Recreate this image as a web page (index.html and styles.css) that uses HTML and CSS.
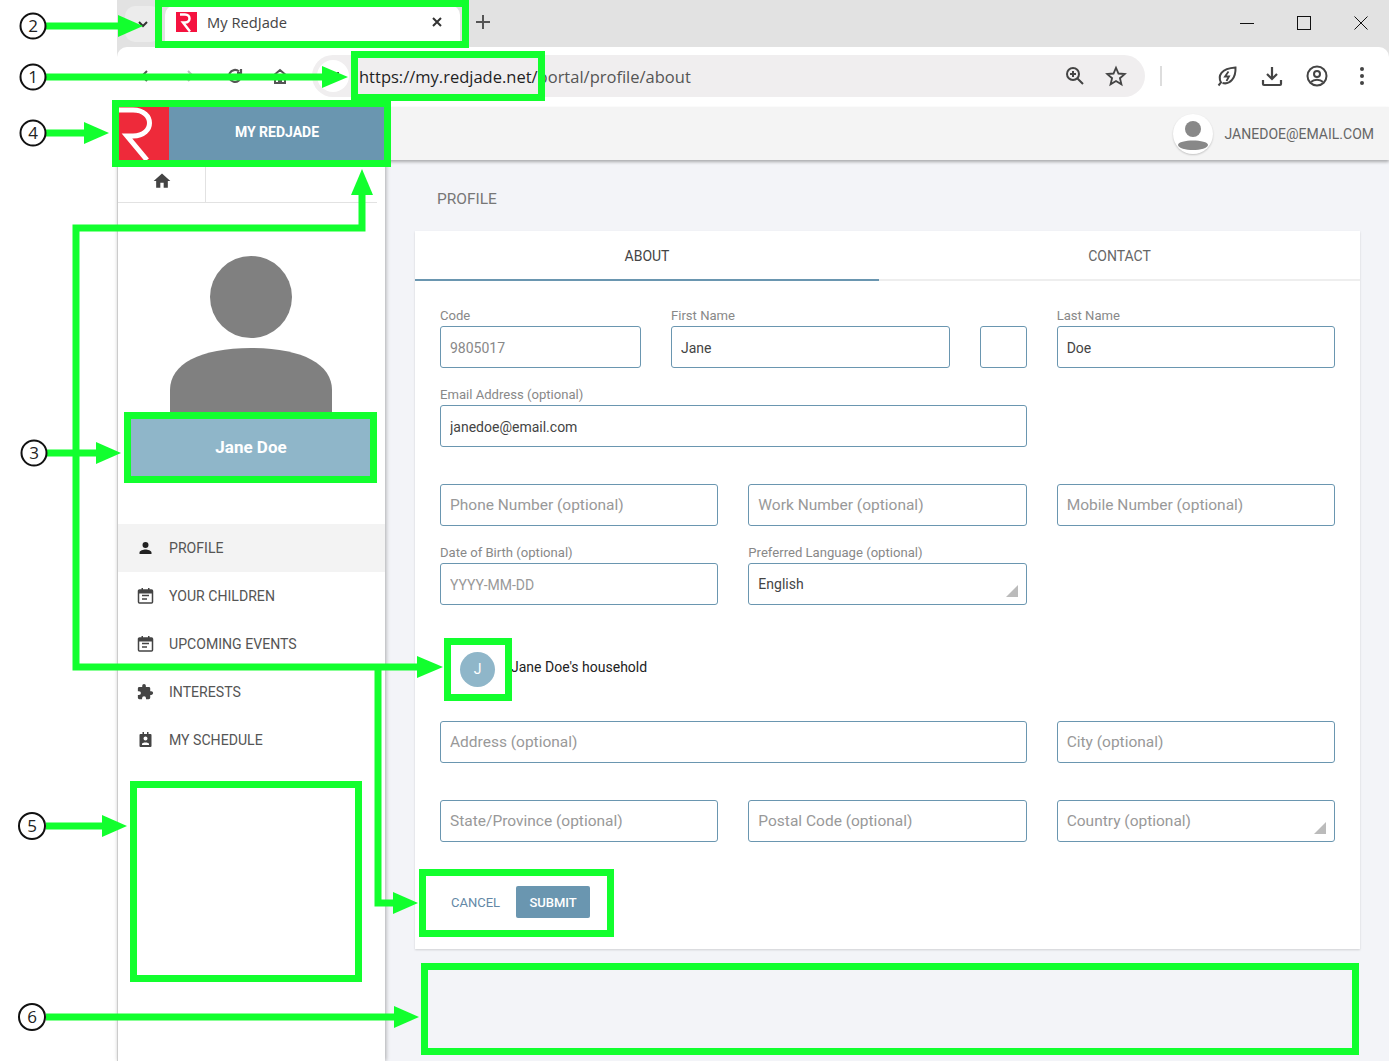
FILE: index.html
```html
<!DOCTYPE html>
<html lang="en">

<head>
  <meta charset="UTF-8">
  <meta name="viewport" content="width=device-width, initial-scale=1.0">
  <title>My RedJade</title>
  <link rel="stylesheet" href="styles.css">
</head>

<body>
  <div class="gutter"></div>
  <div class="browser">
    <div class="tabstrip">
      <div class="tab-search"><svg width="12" height="12" viewBox="0 0 12 12"><path d="M2 4l4 4 4-4" fill="none" stroke="#333" stroke-width="2"/></svg></div>
      <div class="tab">
        <svg class="favicon" width="21" height="20" viewBox="0 0 21 20"><rect width="21" height="20" fill="#f5123f"/><path d="M4 2.500h5c6 0 6 8 0 8H7l7 9" fill="none" stroke="#fff" stroke-width="2.500"/></svg>
        <span class="tab-title">My RedJade</span>
        <svg class="tab-close" width="10" height="10" viewBox="0 0 10 10"><path d="M1 1l8 8M9 1l-8 8" stroke="#333" stroke-width="2"/></svg>
      </div>
      <svg class="new-tab" width="14" height="14" viewBox="0 0 14 14"><path d="M7 0v14M0 7h14" stroke="#555" stroke-width="2"/></svg>
      <div class="win-controls">
        <svg width="14" height="14" viewBox="0 0 14 14"><path d="M0 7.500h14" stroke="#111"/></svg>
        <svg width="14" height="14" viewBox="0 0 14 14"><rect x=".5" y=".5" width="13" height="13" fill="none" stroke="#111"/></svg>
        <svg width="14" height="14" viewBox="0 0 14 14"><path d="M.5.5l13 13M13.500.5l-13 13" stroke="#111"/></svg>
      </div>
    </div>

    <div class="toolbar">
      <div class="nav-icons">
        <span class="nav-icon"><svg width="16" height="16" viewBox="0 0 16 16"><path d="M10 3L5 8l5 5" fill="none" stroke="#555" stroke-width="2"/></svg></span>
        <span class="nav-icon"><svg width="16" height="16" viewBox="0 0 16 16"><path d="M6 3l5 5-5 5" fill="none" stroke="#bbb" stroke-width="2"/></svg></span>
        <span class="nav-icon"><svg width="18" height="18" viewBox="0 0 18 18"><path d="M15 9a6 6 0 1 1-2-4.500M15 2v4h-4" fill="none" stroke="#555" stroke-width="2.200"/></svg></span>
        <span class="nav-icon"><svg width="18" height="18" viewBox="0 0 18 18"><path d="M2 9l7-6 7 6M4 8v8h4v-4h2v4h4V8" fill="none" stroke="#555" stroke-width="2"/></svg></span>
      </div>
      <div class="urlbar">
        <div class="site-info"><svg width="16" height="16" viewBox="0 0 16 16"><path d="M2 5h7M12 5h2M2 11h2M7 11h7" stroke="#444" stroke-width="2"/></svg></div>
        <div class="url"><span class="url-host">https://my.redjade.net/</span><span class="url-path">portal/profile/about</span></div>
        <svg class="url-icon" width="20" height="20" viewBox="0 0 20 20"><circle cx="8" cy="8" r="6" fill="none" stroke="#444" stroke-width="2"/><path d="M12.500 12.500L18 18M5 8h6M8 5v6" stroke="#444" stroke-width="2"/></svg>
        <svg class="url-icon" width="22" height="22" viewBox="0 0 24 24"><path d="M12 3l2.700 6.300 6.800.6-5.200 4.500 1.600 6.600L12 17.500 6.100 21l1.600-6.600L2.500 9.900l6.800-.6z" fill="none" stroke="#444" stroke-width="2"/></svg>
      </div>
      <div class="tool-sep"></div>
      <div class="tool-icons">
        <svg width="22" height="22" viewBox="0 0 22 22"><path d="M2.500 20.500l2.500-3C1.500 11 5 3.500 19.500 2.500 20 13 14 20 6.500 18" fill="none" stroke="#444" stroke-width="2"/><path d="M12.500 6.500L9 11.500h4L10.500 16" fill="none" stroke="#444" stroke-width="1.800"/></svg>
        <svg width="22" height="22" viewBox="0 0 22 22"><path d="M11 2v12M6 9l5 5 5-5" fill="none" stroke="#444" stroke-width="2.200"/><path d="M2 15v4a1 1 0 0 0 1 1h16a1 1 0 0 0 1-1v-4" fill="none" stroke="#444" stroke-width="2.200"/></svg>
        <svg width="22" height="22" viewBox="0 0 22 22"><circle cx="11" cy="11" r="9.500" fill="none" stroke="#444" stroke-width="2"/><circle cx="11" cy="9" r="3" fill="none" stroke="#444" stroke-width="2"/><path d="M5 17c3-3 9-3 12 0" fill="none" stroke="#444" stroke-width="2"/></svg>
        <svg width="22" height="22" viewBox="0 0 22 22"><circle cx="11" cy="4" r="2" fill="#444"/><circle cx="11" cy="11" r="2" fill="#444"/><circle cx="11" cy="18" r="2" fill="#444"/></svg>
      </div>
    </div>

    <header class="app-header">
      <div class="brand">
        <svg class="brand-logo" width="50" height="53" viewBox="0 0 50 53"><rect width="50" height="53" fill="#ee2a3a"/><path d="M0 3h14c22 0 22 26 0 26H8l20 24" fill="none" stroke="#fff" stroke-width="5"/></svg>
        <div class="brand-name">MY REDJADE</div>
      </div>
      <div class="user">
        <div class="user-avatar"><svg width="40" height="40" viewBox="0 0 40 40"><circle cx="20" cy="15" r="8" fill="#888"/><path d="M5 31c0-6 30-6 30 0 0 3-8 5-15 5S5 34 5 31z" fill="#888"/></svg></div>
        <span class="user-email">JANEDOE@EMAIL.COM</span>
      </div>
    </header>

    <div class="app-body">
      <aside class="sidebar">
        <div class="crumbs">
          <div class="crumb-home"><svg width="20" height="20" viewBox="0 0 24 24"><path d="M10 20v-6h4v6h5v-8h3L12 3 2 12h3v8z" fill="#444"/></svg></div>
        </div>
        <div class="profile-pic">
          <svg width="162" height="155" viewBox="0 0 162 155"><circle cx="81" cy="40" r="41" fill="#808080"/><path d="M0 155v-22c0-26 30-42 81-42s81 16 81 42v22z" fill="#808080"/></svg>
        </div>
        <div class="profile-name">Jane Doe</div>
        <nav class="menu">
          <a class="menu-item active"><svg width="17" height="16" viewBox="0 0 24 24"><path d="M12 12a4.500 4.500 0 1 0 0-9 4.500 4.500 0 0 0 0 9zm0 2.300c-3 0-9 1.500-9 4.500V21h18v-2.200c0-3-6-4.500-9-4.500z" fill="#222"/></svg>PROFILE</a>
          <a class="menu-item"><svg width="17" height="16" viewBox="0 0 17 16"><path d="M2.500 2h12a1 1 0 0 1 1 1v11a1 1 0 0 1-1 1h-12a1 1 0 0 1-1-1V3a1 1 0 0 1 1-1zM5 7.500h7M5 11h5" fill="none" stroke="#444" stroke-width="1.500"/><path d="M2 2h13v3.500H2zM4.500 0H6v3H4.500zM11 0h1.500v3H11z" fill="#444"/></svg>YOUR CHILDREN</a>
          <a class="menu-item"><svg width="17" height="16" viewBox="0 0 17 16"><path d="M2.500 2h12a1 1 0 0 1 1 1v11a1 1 0 0 1-1 1h-12a1 1 0 0 1-1-1V3a1 1 0 0 1 1-1zM5 7.500h7M5 11h5" fill="none" stroke="#444" stroke-width="1.500"/><path d="M2 2h13v3.500H2zM4.500 0H6v3H4.500zM11 0h1.500v3H11z" fill="#444"/></svg>UPCOMING EVENTS</a>
          <a class="menu-item"><svg width="17" height="16" viewBox="1 1 23 22"><path d="M20.500 11H19V7a2 2 0 0 0-2-2h-4V3.500a2.500 2.500 0 0 0-5 0V5H4a2 2 0 0 0-2 2v3.800h1.500a2.700 2.700 0 0 1 0 5.400H2V20a2 2 0 0 0 2 2h3.800v-1.500a2.700 2.700 0 0 1 5.400 0V22H17a2 2 0 0 0 2-2v-4h1.500a2.500 2.500 0 0 0 0-5z" fill="#444"/></svg>INTERESTS</a>
          <a class="menu-item"><svg width="17" height="16" viewBox="0 0 16 16"><path d="M3 2h2V0h1.500v2h3V0H11v2h2a1 1 0 0 1 1 1v11a1 1 0 0 1-1 1H3a1 1 0 0 1-1-1V3a1 1 0 0 1 1-1zm5 2.500a2 2 0 1 0 0 4 2 2 0 0 0 0-4zM4.500 12v1h7v-1c0-2-7-2-7 0z" fill="#444" fill-rule="evenodd"/></svg>MY SCHEDULE</a>
        </nav>
      </aside>

      <main class="main">
        <h2 class="page-title">PROFILE</h2>
        <section class="card">
          <div class="tabs">
            <div class="tabs-item selected">ABOUT</div>
            <div class="tabs-item">CONTACT</div>
          </div>
          <form class="form">
            <div class="row">
              <div class="name-group">
                <div class="field field-code">
                  <label>Code</label>
                  <input class="muted" value="9805017" readonly>
                </div>
                <div class="field field-first">
                  <label>First Name</label>
                  <input value="Jane">
                </div>
                <div class="field field-mid">
                  <label>&nbsp;</label>
                  <input>
                </div>
              </div>
              <div class="field">
                <label>Last Name</label>
                <input value="Doe">
              </div>
            </div>

            <div class="row">
              <div class="field span-2">
                <label>Email Address (optional)</label>
                <input value="janedoe@email.com">
              </div>
            </div>

            <div class="row">
              <div class="field"><label>&nbsp;</label><input placeholder="Phone Number (optional)"></div>
              <div class="field"><label>&nbsp;</label><input placeholder="Work Number (optional)"></div>
              <div class="field"><label>&nbsp;</label><input placeholder="Mobile Number (optional)"></div>
            </div>

            <div class="row">
              <div class="field">
                <label>Date of Birth (optional)</label>
                <input class="small-ph" placeholder="YYYY-MM-DD">
              </div>
              <div class="field select">
                <label>Preferred Language (optional)</label>
                <input value="English">
              </div>
            </div>

            <div class="household">
              <div class="household-badge">J</div>
              <span class="household-name">Jane Doe's household</span>
            </div>

            <div class="row">
              <div class="field span-2"><label>&nbsp;</label><input placeholder="Address (optional)"></div>
              <div class="field"><label>&nbsp;</label><input placeholder="City (optional)"></div>
            </div>

            <div class="row">
              <div class="field"><label>&nbsp;</label><input placeholder="State/Province (optional)"></div>
              <div class="field"><label>&nbsp;</label><input placeholder="Postal Code (optional)"></div>
              <div class="field select"><label>&nbsp;</label><input placeholder="Country (optional)"></div>
            </div>

            <div class="actions">
              <button type="button" class="btn-cancel">CANCEL</button>
              <button type="button" class="btn-submit">SUBMIT</button>
            </div>
          </form>
        </section>
      </main>
    </div>
  </div>

  <!-- callouts drawn over the screenshot -->
  <svg class="callouts" width="1389" height="1061" viewBox="0 0 1389 1061">
    <g fill="none" stroke="#12ff2e" stroke-width="7">
      <rect x="158.500" y="3.500" width="307" height="41"/>
      <rect x="354.500" y="54.500" width="187" height="43"/>
      <rect x="115.500" y="103.500" width="272" height="60"/>
      <rect x="127.500" y="415.500" width="246" height="64"/>
      <rect x="447.500" y="641.500" width="61" height="56"/>
      <rect x="133.500" y="784.500" width="225" height="194"/>
      <rect x="424.500" y="966.500" width="931" height="85"/>
      <rect x="422.500" y="872.500" width="188" height="61"/>
    </g>
    <g fill="none" stroke="#12ff2e" stroke-width="7">
      <path d="M46 26h74"/>
      <path d="M46 77h280"/>
      <path d="M46 133h42"/>
      <path d="M47 453h52"/>
      <path d="M46 826h58"/>
      <path d="M46 1017h350"/>
      <path d="M362 192v36H76v439h345"/>
      <path d="M378 667v236h18"/>
    </g>
    <g fill="#12ff2e">
      <polygon points="118,15 143,26 118,37"/>
      <polygon points="322,66 348,77 322,88"/>
      <polygon points="84,122 109,133 84,144"/>
      <polygon points="96,442 121,453 96,464"/>
      <polygon points="102,815 127,826 102,837"/>
      <polygon points="394,1006 419,1017 394,1028"/>
      <polygon points="351,195 362,169 373,195"/>
      <polygon points="417,656 443,667 417,678"/>
      <polygon points="393,892 418,903 393,914"/>
    </g>
    <g class="num-circles">
      <circle cx="33" cy="26" r="12.500"/><text x="33" y="32">2</text>
      <circle cx="33" cy="77" r="12.500"/><text x="33" y="83">1</text>
      <circle cx="33" cy="133" r="12.500"/><text x="33" y="139">4</text>
      <circle cx="34" cy="453" r="12.500"/><text x="34" y="459">3</text>
      <circle cx="32" cy="826" r="13"/><text x="32" y="832">5</text>
      <circle cx="32" cy="1017" r="13"/><text x="32" y="1023">6</text>
    </g>
  </svg>
</body>

</html>
```
FILE: styles.css
```css
* {
  box-sizing: border-box;
}

body {
  display: flex;
  height: 1061px;
  margin: 0;
  overflow: hidden;
  background: #fff;
  font-family: Roboto, "Liberation Sans", sans-serif;
  color: #555;
}

.gutter {
  flex: 0 0 117px;
}

.browser {
  flex: 1;
  display: flex;
  flex-direction: column;
  min-width: 0;
  background: #e2e2e2;
}

/* tab strip */
.tabstrip {
  display: flex;
  align-items: center;
  height: 47px;
  padding-left: 8px;
}

.tab-search {
  display: flex;
  align-items: center;
  justify-content: center;
  width: 36px;
  height: 36px;
  margin-right: 4px;
  border-radius: 10px;
  background: #ececec;
}

.tab {
  display: flex;
  align-items: center;
  width: 295px;
  height: 42px;
  margin-top: 5px;
  padding: 0 18px 9px 11px;
  border-radius: 10px 10px 0 0;
  background: #fff;
}

.favicon {
  margin-right: 10px;
}

.tab-title {
  flex: 1;
  font-family: "Open Sans", sans-serif;
  font-size: 14.700px;
  color: #444;
}

.new-tab {
  margin: 0 0 3px 16px;
}

.win-controls {
  display: flex;
  gap: 43px;
  margin: 0 0 2px auto;
  padding-right: 21px;
}

/* toolbar */
.toolbar {
  display: flex;
  align-items: center;
  height: 60px;
  padding: 0 0 2px 5px;
  border-radius: 10px 10px 0 0;
  background: #fff;
}

.nav-icons {
  display: flex;
  align-items: center;
  width: 190px;
}

.nav-icon {
  flex: 0 0 45px;
  display: flex;
  justify-content: center;
}

.urlbar {
  flex: 0 0 833px;
  display: flex;
  align-items: center;
  height: 42px;
  padding: 0 18px 0 5px;
  border-radius: 21px;
  background: #f0eeef;
}

.site-info {
  display: flex;
  align-items: center;
  justify-content: center;
  width: 32px;
  height: 32px;
  margin-right: 10px;
  border-radius: 50%;
  background: #fff;
}

.url {
  flex: 1;
  font-family: "Open Sans", sans-serif;
  font-size: 16.500px;
}

.url-host {
  color: #1f1f1f;
}

.url-path {
  color: #555;
}

.url-icon {
  margin-left: 20px;
}

.tool-sep {
  width: 2px;
  height: 20px;
  margin-left: 15px;
  background: #ddd;
}

.tool-icons {
  display: flex;
  align-items: center;
  gap: 23px;
  margin-left: 54px;
}

/* app header */
.app-header {
  position: relative;
  z-index: 2;
  display: flex;
  align-items: stretch;
  justify-content: space-between;
  height: 53px;
  background: #f4f4f4;
  box-shadow: 0 2px 3px rgba(0, 0, 0, .3);
}

.brand {
  display: flex;
  width: 266px;
  margin-left: 2px;
}

.brand-name {
  flex: 1;
  display: flex;
  align-items: center;
  justify-content: center;
  padding-bottom: 3px;
  background: #6a96b0;
  color: #fff;
  font-size: 14px;
  font-weight: 700;
}

.user {
  display: flex;
  align-items: center;
  gap: 12px;
  padding: 1px 15px 0 0;
}

.user-avatar {
  display: flex;
  width: 40px;
  height: 40px;
  overflow: hidden;
  border-radius: 50%;
  background: #fff;
  box-shadow: 0 1px 2px rgba(0, 0, 0, .2);
}

.user-email {
  font-size: 14px;
  color: #666;
}

.app-body {
  flex: 1;
  display: flex;
  min-height: 0;
  background: #fff;
}

/* sidebar */
.sidebar {
  flex: 0 0 268px;
  border-left: 1px solid #ccc;
  background: #fff;
  box-shadow: 1px 0 4px rgba(0, 0, 0, .3);
  z-index: 1;
}

.crumbs {
  display: flex;
  width: 259px;
  height: 43px;
  border-bottom: 1px solid #e2e2e2;
}

.crumb-home {
  display: flex;
  align-items: center;
  justify-content: center;
  width: 88px;
  border-right: 1px solid #e2e2e2;
}

.profile-pic {
  display: flex;
  justify-content: center;
  height: 216px;
  padding: 54px 2px 0 0;
}

.profile-pic svg {
  overflow: visible;
}

.profile-name {
  display: flex;
  align-items: center;
  justify-content: center;
  width: 239px;
  height: 57px;
  margin-left: 13px;
  padding: 0 0 2px 1px;
  background: #8fb6c9;
  color: #fff;
  font-size: 17px;
  font-weight: 700;
}

.menu {
  margin-top: 48px;
}

.menu-item {
  display: flex;
  align-items: center;
  gap: 15px;
  height: 48px;
  padding-left: 19px;
  color: #555;
  font-size: 14.100px;
}

.menu-item svg {
  flex: 0 0 17px;
}

.menu-item.active {
  background: #f3f3f3;
}

/* main */
.main {
  flex: 1;
  min-width: 0;
  padding: 30px 29px 0 30px;
  background: #f3f4f8;
}

.page-title {
  margin: 0 0 23px;
  padding-left: 22px;
  color: #777;
  font-size: 15.500px;
  font-weight: 400;
  line-height: 18px;
}

.card {
  background: #fff;
  box-shadow: 0 1px 2px rgba(0, 0, 0, .15);
}

.tabs {
  display: flex;
  height: 50px;
  border-bottom: 2px solid #eee;
}

.tabs-item {
  flex: 0 0 464px;
  display: flex;
  align-items: center;
  justify-content: center;
  height: 50px;
  color: #666;
  font-size: 14px;
}

.tabs-item:last-child {
  flex: 1;
}

.tabs-item.selected {
  padding-top: 2px;
  border-bottom: 2px solid #6a96b0;
  color: #444;
}

.form {
  display: flex;
  flex-direction: column;
  gap: 19px;
  padding: 27px 25px 31px;
}

.row {
  display: grid;
  grid-template-columns: repeat(3, 1fr);
  gap: 30px;
}

.name-group {
  grid-column: span 2;
  display: flex;
  gap: 30px;
}

.span-2 {
  grid-column: span 2;
}

.field {
  position: relative;
  display: flex;
  flex-direction: column;
  justify-content: flex-end;
  min-width: 0;
}

.field-code {
  flex: 0 0 201px;
}

.field-first {
  flex: 0 0 279px;
}

.field-mid {
  flex: 1;
}

.field label {
  height: 18px;
  color: #888;
  font-size: 13.100px;
  line-height: 15px;
}

.field input {
  width: 100%;
  height: 42px;
  padding: 1px 9px 0;
  border: 1px solid #6a96b0;
  border-radius: 3px;
  outline: none;
  background: #fff;
  color: #444;
  font-family: Roboto, sans-serif;
  font-size: 14px;
}

.field input:placeholder-shown,
.select input {
  padding-top: 0;
}

.field input.small-ph {
  padding-top: 1px;
}

.field input.muted {
  color: #888;
}

.field input::placeholder {
  color: #999;
  font-size: 15.500px;
}

.field input.small-ph::placeholder {
  font-size: 14px;
}

/* corner arrow on dropdowns */
.select::after {
  content: "";
  position: absolute;
  right: 9px;
  bottom: 8px;
  border-style: solid;
  border-width: 0 0 12px 12px;
  border-color: transparent transparent #bbb transparent;
}

.household {
  display: flex;
  align-items: center;
  height: 60px;
  padding-top: 30px;
  color: #222;
  font-size: 14px;
}

.household-badge {
  display: flex;
  align-items: center;
  justify-content: center;
  width: 35px;
  height: 35px;
  margin: 0 16px 0 20px;
  border-radius: 50%;
  background: #8fb6c9;
  color: #fff;
  font-size: 14px;
}

.household-name {
  margin-bottom: 4px;
}

.actions {
  display: flex;
  align-items: center;
  gap: 16px;
  height: 32px;
  margin-top: 25px;
  padding-left: 11px;
}

.btn-cancel,
.btn-submit {
  height: 32px;
  border: 0;
  font-family: Roboto, sans-serif;
  font-size: 13px;
}

.btn-cancel {
  padding: 0;
  background: none;
  color: #6488a6;
}

.btn-submit {
  width: 74px;
  border-radius: 2px;
  background: #6a96b0;
  color: #fff;
  font-weight: 500;
}

/* annotations */
.callouts {
  position: absolute;
  top: 0;
  left: 0;
  z-index: 10;
  pointer-events: none;
}

.num-circles circle {
  fill: #fff;
  stroke: #111;
  stroke-width: 2;
}

.num-circles text {
  fill: #222;
  font-family: "Open Sans", sans-serif;
  font-size: 17px;
  text-anchor: middle;
}
```
